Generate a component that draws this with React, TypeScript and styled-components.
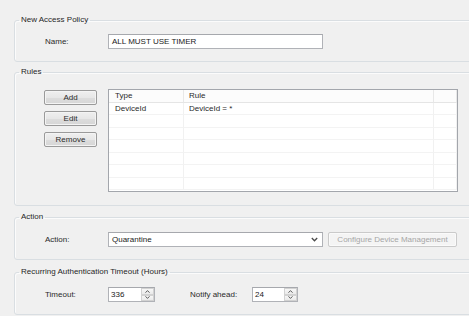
import React from "react";
import styled, { createGlobalStyle } from "styled-components";

const Global = createGlobalStyle`
  html, body { margin: 0; padding: 0; background: #f0f0f0; overflow: hidden; }
  body {
    font-family: "Liberation Sans", Arial, sans-serif;
    font-size: 8px;
    color: #2a2a2a;
  }
  * { box-sizing: border-box; }
`;

const Page = styled.div`
  width: 469px;
  height: 316px;
  overflow: hidden;
  padding: 15px 0 0 14px;
  display: flex;
  flex-direction: column;
  align-items: flex-start;
`;

const Group = styled.fieldset<{ $gap: number }>`
  flex: none;
  width: 480px;
  margin: ${(p) => p.$gap}px 0 0 0;
  padding: 0;
  border: 1px solid #d9dee2;
  border-radius: 3px;
  min-width: 0;
  box-shadow: inset 1px 1px 0 #fbfbfb;
`;

const Legend = styled.legend`
  margin-left: 4px;
  padding: 0 2px;
  line-height: 10px;
  font-size: 8px;
  font-weight: normal;
  color: #262626;
`;

const Body = styled.div<{ $pt: number; $pb: number; $pl: number }>`
  padding: ${(p) => p.$pt}px 0 ${(p) => p.$pb}px ${(p) => p.$pl}px;
`;

const FieldRow = styled.div`
  display: flex;
  align-items: center;
`;

const Label = styled.span<{ $w: number }>`
  width: ${(p) => p.$w}px;
  flex: none;
  line-height: 15px;
  color: #2a2a2a;
`;

const TextBox = styled.div<{ $w: number }>`
  width: ${(p) => p.$w}px;
  height: 15px;
  flex: none;
  background: #fff;
  border: 1px solid #b0b2b7;
  border-top-color: #a6a8ad;
  padding: 0 3px;
  line-height: 13px;
  color: #1a1a1a;
  white-space: nowrap;
`;

const Combo = styled(TextBox)`
  display: flex;
  align-items: center;
  justify-content: space-between;
  padding: 0 4px 0 3px;
`;

const Button = styled.div<{ $w: number; $disabled?: boolean }>`
  width: ${(p) => p.$w}px;
  height: 15px;
  flex: none;
  border: 1px solid ${(p) => (p.$disabled ? "#cacaca" : "#9a9a9a")};
  border-radius: 2px;
  background: ${(p) =>
    p.$disabled
      ? "#f4f4f4"
      : "linear-gradient(#efefef 0%, #e7e7e7 50%, #dddddd 51%, #d6d6d6 100%)"};
  box-shadow: inset 0 0 0 1px ${(p) => (p.$disabled ? "#fafafa" : "#f4f4f4")};
  color: ${(p) => (p.$disabled ? "#a6a6a6" : "#2a2a2a")};
  text-align: center;
  line-height: 13px;
  white-space: nowrap;
`;

const RulesLayout = styled.div`
  display: flex;
  align-items: flex-start;
`;

const ButtonColumn = styled.div`
  display: flex;
  flex-direction: column;
  gap: 6px;
  margin-top: 1px;
  margin-right: 11px;
`;

const ListView = styled.div`
  width: 350px;
  height: 103px;
  border: 1px solid #a3a6ac;
  background: #fff;
  display: grid;
  grid-template-columns: 75px 250px 1fr;
  grid-template-rows: 13px repeat(7, 12.43px);
  overflow: hidden;
`;

const HeaderCell = styled.div<{ $pl?: number }>`
  background: #fcfcfc;
  border-right: 1px solid #e8e8e8;
  border-bottom: 1px solid #e5e5e5;
  padding-left: ${(p) => p.$pl ?? 5}px;
  line-height: 12px;
  white-space: nowrap;
`;

const Cell = styled.div<{ $pl?: number }>`
  border-right: 1px solid #f1f1f1;
  border-bottom: 1px solid #f3f3f3;
  padding-left: ${(p) => p.$pl ?? 5}px;
  line-height: 12px;
  white-space: nowrap;
  overflow: hidden;
`;

const Gap = styled.span<{ $w: number }>`
  width: ${(p) => p.$w}px;
  flex: none;
`;

const Spin = styled.div<{ $w: number }>`
  width: ${(p) => p.$w}px;
  height: 15px;
  flex: none;
  display: flex;
  background: #fff;
  border: 1px solid #b0b2b7;
  border-top-color: #a6a8ad;
`;

const SpinText = styled.span`
  flex: 1;
  padding-left: 2px;
  line-height: 13px;
  color: #1a1a1a;
`;

const SpinButtons = styled.div`
  width: 13px;
  display: flex;
  flex-direction: column;
`;

const SpinBtn = styled.div`
  flex: 1;
  border: 1px solid #d2d2d2;
  background: linear-gradient(#f7f7f7, #eaeaea);
  display: flex;
  align-items: center;
  justify-content: center;
`;

const Caret = ({ up }: { up?: boolean }) => (
  <svg width="5" height="3" viewBox="0 0 5 3">
    <path
      d={up ? "M0.5 2.7 L2.5 0.6 L4.5 2.7" : "M0.5 0.3 L2.5 2.4 L4.5 0.3"}
      fill="none"
      stroke="#5a5a5a"
      strokeWidth="1"
    />
  </svg>
);

const Chevron = () => (
  <svg width="7" height="5" viewBox="0 0 7 5">
    <path d="M0.8 1 L3.5 3.8 L6.2 1" fill="none" stroke="#4a4a4a" strokeWidth="1.3" />
  </svg>
);

const NumericBox = ({ value, width }: { value: string; width: number }) => (
  <Spin $w={width}>
    <SpinText>{value}</SpinText>
    <SpinButtons>
      <SpinBtn>
        <Caret up />
      </SpinBtn>
      <SpinBtn>
        <Caret />
      </SpinBtn>
    </SpinButtons>
  </Spin>
);

const rows: [string, string][] = [
  ["DeviceId", "DeviceId = *"],
  ["", ""],
  ["", ""],
  ["", ""],
  ["", ""],
  ["", ""],
  ["", ""],
];

export default function App() {
  return (
    <>
      <Global />
      <Page>
        <Group $gap={0}>
          <Legend>New Access Policy</Legend>
          <Body $pt={9} $pb={12} $pl={30}>
            <FieldRow>
              <Label $w={63}>Name:</Label>
              <TextBox $w={215}>ALL MUST USE TIMER</TextBox>
            </FieldRow>
          </Body>
        </Group>

        <Group $gap={5}>
          <Legend>Rules</Legend>
          <Body $pt={12} $pb={13} $pl={29}>
            <RulesLayout>
              <ButtonColumn>
                <Button $w={53}>Add</Button>
                <Button $w={53}>Edit</Button>
                <Button $w={53}>Remove</Button>
              </ButtonColumn>
              <ListView>
                <HeaderCell $pl={6}>Type</HeaderCell>
                <HeaderCell>Rule</HeaderCell>
                <HeaderCell />
                {rows.map(([type, rule], i) => (
                  <React.Fragment key={i}>
                    <Cell $pl={6}>{type}</Cell>
                    <Cell>{rule}</Cell>
                    <Cell />
                  </React.Fragment>
                ))}
              </ListView>
            </RulesLayout>
          </Body>
        </Group>

        <Group $gap={6}>
          <Legend>Action</Legend>
          <Body $pt={10} $pb={12} $pl={30}>
            <FieldRow>
              <Label $w={63}>Action:</Label>
              <Combo $w={215}>
                <span>Quarantine</span>
                <Chevron />
              </Combo>
              <Gap $w={5} />
              <Button $w={129} $disabled>
                Configure Device Management
              </Button>
            </FieldRow>
          </Body>
        </Group>

        <Group $gap={7}>
          <Legend>Recurring Authentication Timeout (Hours)</Legend>
          <Body $pt={10} $pb={12} $pl={30}>
            <FieldRow>
              <Label $w={63}>Timeout:</Label>
              <NumericBox value="336" width={47} />
              <Gap $w={35} />
              <Label $w={62}>Notify ahead:</Label>
              <NumericBox value="24" width={46} />
            </FieldRow>
          </Body>
        </Group>
      </Page>
    </>
  );
}
